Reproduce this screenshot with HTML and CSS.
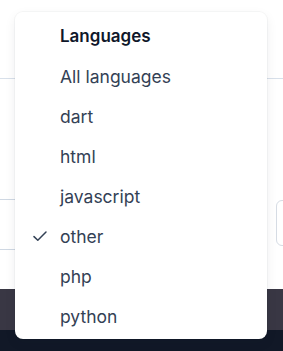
FILE: index.html
```html
<!DOCTYPE html>
<html>
<head>
<meta charset="utf-8">
<link rel="stylesheet" href="styles.css">
</head>
<body>
<div class="page">
  <div class="topbar"></div>
  <div class="content">
    <div class="filters">
      <div class="input-left"></div>
      <div class="input-right"></div>
    </div>
  </div>
  <div class="band"></div>
  <div class="footer"></div>

  <div class="menu" role="listbox">
    <div class="row heading">Languages</div>
    <div class="row">All languages</div>
    <div class="row">dart</div>
    <div class="row">html</div>
    <div class="row">javascript</div>
    <div class="row selected">
      <svg class="check" width="16" height="16" viewBox="0 0 16 16"><path d="M2 8.6 L5.8 12.2 L14 4" fill="none" stroke="#334155" stroke-width="1.5" stroke-linecap="round" stroke-linejoin="round"/></svg>
      other
    </div>
    <div class="row">php</div>
    <div class="row">python</div>
  </div>
</div>
</body>
</html>
```

FILE: styles.css
```css
html, body {
  margin: 0;
  padding: 0;
  background: #ffffff;
  font-family: Inter, "Noto Sans", sans-serif;
}
.page {
  position: relative;
  width: 283px;
  height: 351px;
  overflow: hidden;
  display: flex;
  flex-direction: column;
}
.topbar {
  height: 78px;
  border-bottom: 1px solid #d8e0ea;
  flex: none;
}
.content {
  flex: none;
  height: 210px;
  padding-top: 120px;
  box-sizing: border-box;
}
.filters {
  display: flex;
  justify-content: space-between;
}
.input-left {
  width: 40px;
  height: 49px;
  margin-left: -10px;
  border: 1px solid #cfd8e3;
  border-left: none;
  border-radius: 6px;
}
.input-right {
  width: 40px;
  height: 44px;
  margin-top: 1px;
  margin-right: -35px;
  border: 1px solid #d6dce4;
  border-radius: 6px;
}
.band {
  flex: none;
  height: 41px;
  background: #393744;
}
.footer {
  flex: 1;
  background: #111827;
}
.menu {
  position: absolute;
  left: 15px;
  top: 12px;
  width: 252px;
  box-sizing: border-box;
  padding: 4px 0 3px;
  background: #ffffff;
  border-radius: 8px;
  box-shadow: 0 0 0 1px rgba(15, 23, 42, 0.03), 0 4px 12px rgba(15, 23, 42, 0.07);
}
.row {
  position: relative;
  height: 40px;
  display: flex;
  align-items: center;
  padding-left: 45px;
  font-size: 17.5px;
  color: #334155;
  letter-spacing: 0;
}
.heading {
  font-size: 17px;
  font-weight: 600;
  color: #0f172a;
}
.check {
  position: absolute;
  left: 17px;
  top: 12px;
}
```
